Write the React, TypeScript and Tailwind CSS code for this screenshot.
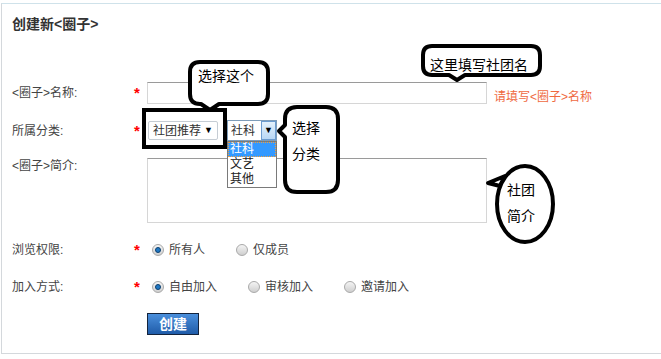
import React from 'react';

const font = "font-['Liberation_Sans','Noto_Sans_CJK_SC',sans-serif]";

// Field row: label column + red star + control
const Row = ({ label, star = true, className = '', children }: { label: string; star?: boolean; className?: string; children: React.ReactNode }) => (
  <div className={`flex ${className}`}>
    <div className="w-[122px] text-[12px] leading-[16px] text-[#444]">{label}</div>
    <div className="w-[13px] text-[15px] leading-[14px] font-bold text-[#ff0000]">{star ? '*' : ''}</div>
    {children}
  </div>
);

const Radio = ({ checked, label }: { checked?: boolean; label: string }) => (
  <div className="flex items-center mr-[26px]">
    <span className="ml-[5px] w-[12px] h-[12px] rounded-full border border-[#a9a9a9] bg-gradient-to-b from-[#f4f4f4] to-[#cfcfcf] flex items-center justify-center">
      {checked && <span className="w-[6px] h-[6px] rounded-full bg-[#1f78c4] border border-[#0d3f6e]" />}
    </span>
    <span className="ml-[5px] text-[12px] leading-[16px] text-[#444]">{label}</span>
  </div>
);

export default function App() {
  return (
    <div className={`relative w-[661px] h-[359px] bg-white overflow-hidden ${font}`}>
      <div className="ml-[1px] mt-[3px] w-[660px] h-[351px] border border-r-0 border-[#d4d8dc] border-t-[#cfe2ea] pl-[10px] pt-[10px]">
        <div className="text-[14px] leading-[20px] font-bold text-[#333]">创建新&lt;圈子&gt;</div>

        {/* name */}
        <Row label="<圈子>名称:" className="mt-[48px] h-[22px] items-center">
          <div className="w-[340px] h-[22px] border border-[#d6d6d6] border-t-[#9a9a9a] bg-white" />
          <span className="ml-[7px] mt-[8px] text-[12px] leading-[16px] text-[#ef6a3f]">请填写&lt;圈子&gt;名称</span>
        </Row>

        {/* category */}
        <Row label="所属分类:" className="mt-[16px] h-[21px] items-center">
          <div className="ml-[1px] w-[70px] h-[19px] border border-[#c6cdd4] rounded-[2px] bg-white flex items-center justify-between px-[4px]">
            <span className="text-[12px] leading-[14px] text-[#333]">社团推荐</span>
            <span className="text-[9px] leading-[9px] text-black">▼</span>
          </div>
          <div className="relative ml-[9px] w-[50px] h-[21px] border border-[#7f9db9] bg-white flex items-center">
            <span className="ml-[3px] flex-1 text-[12px] leading-[14px] text-[#333]">社科</span>
            <span className="w-[15px] h-[19px] border border-[#6c9cd0] bg-gradient-to-b from-[#e4f1fc] to-[#b9d8f5] flex items-center justify-center text-[9px] text-black">▼</span>
            <div className="absolute left-[-1px] top-[20px] w-[50px] h-[47px] border border-[#7a7a7a] bg-white text-[12px] leading-[15px]">
              <div className="h-[15px] bg-[#3399ff] text-white border border-dotted border-[#f0a040] leading-[13px] pl-[1px]">社科</div>
              <div className="h-[15px] text-[#222] pl-[2px]">文艺</div>
              <div className="h-[15px] text-[#222] pl-[2px]">其他</div>
            </div>
          </div>
        </Row>

        {/* intro */}
        <Row label="<圈子>简介:" star={false} className="mt-[17px] items-start">
          <div className="w-[340px] h-[65px] border border-[#d6d6d6] border-t-[#9a9a9a] bg-white" />
        </Row>

        <Row label="浏览权限:" className="mt-[19px] h-[16px] items-center">
          <Radio checked label="所有人" />
          <Radio label="仅成员" />
        </Row>

        <Row label="加入方式:" className="mt-[21px] h-[16px] items-center">
          <Radio checked label="自由加入" />
          <Radio label="审核加入" />
          <Radio label="邀请加入" />
        </Row>

        <button className="mt-[18px] ml-[135px] w-[52px] h-[22px] border border-[#14243d] bg-gradient-to-b from-[#4a8fdc] to-[#1f5ca9] text-white text-[14px] font-bold leading-[20px]">
          创建
        </button>
      </div>

      {/* hand-drawn annotations */}
      <div className="absolute left-[142px] top-[108px] w-[85px] h-[41px] border-[4px] border-black" />
      <svg className="absolute inset-0 pointer-events-none" width="661" height="359">
        <g fill="white" stroke="black" strokeWidth="4" strokeLinejoin="round">
          <path d="M200,62 H258 Q268,62 268,72 V94 Q268,104 258,104 H219 L210,110 L201,104 H200 Q190,104 190,94 V72 Q190,62 200,62 Z" />
          <path d="M432,46 H531 Q540,46 540,55 V66 Q540,75 531,75 H465 L457,80 L449,75 H432 Q423,75 423,66 V55 Q423,46 432,46 Z" />
          <path d="M297,107 H326 Q338,107 338,119 V180 Q338,192 326,192 H297 Q285,192 285,180 V137 L279,131 L285,125 V119 Q285,107 297,107 Z" />
          <path d="M500,186 L488,183 L505,176 Z" />
          <ellipse cx="525" cy="204" rx="28" ry="38" />
        </g>
      </svg>
      <span className="absolute left-[198px] top-[67px] text-[14px] leading-[18px] text-black">选择这个</span>
      <span className="absolute left-[430px] top-[56px] text-[14px] leading-[18px] text-black">这里填写社团名</span>
      <span className="absolute left-[292px] top-[119px] text-[14px] leading-[18px] text-black">选择</span>
      <span className="absolute left-[292px] top-[145px] text-[14px] leading-[18px] text-black">分类</span>
      <span className="absolute left-[507px] top-[181px] text-[14px] leading-[18px] text-black">社团</span>
      <span className="absolute left-[507px] top-[207px] text-[14px] leading-[18px] text-black">简介</span>
    </div>
  );
}
